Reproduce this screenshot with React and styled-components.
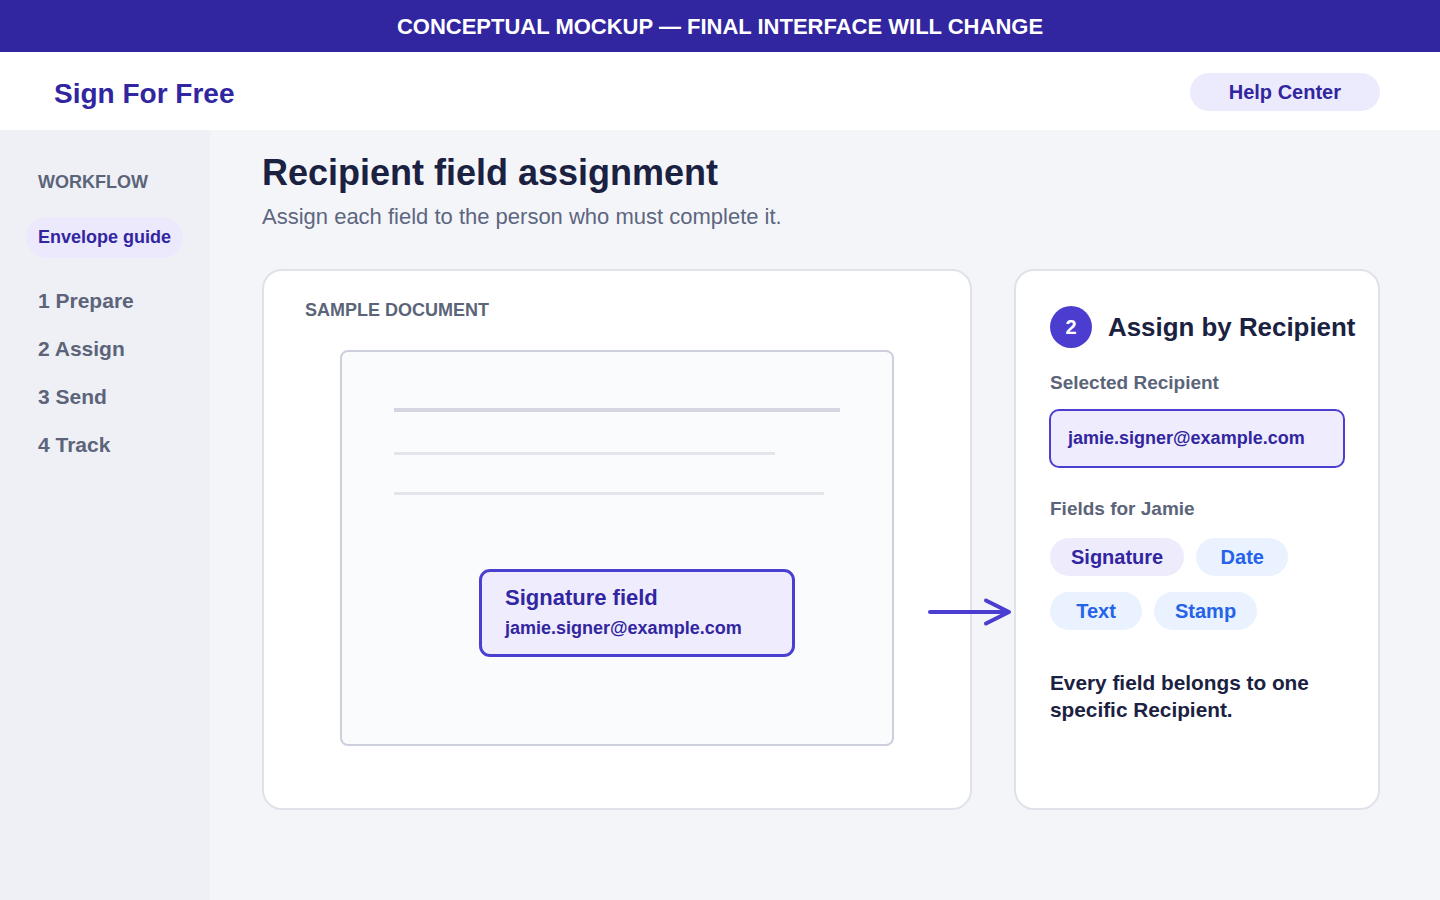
import React from "react";
import styled, { createGlobalStyle } from "styled-components";

const GlobalStyle = createGlobalStyle`
  * { box-sizing: border-box; }
  html, body { margin: 0; padding: 0; }
  body {
    font-family: "Liberation Sans", Arial, Helvetica, sans-serif;
    background: #f4f5f9;
    color: #1b2140;
  }
`;

const Banner = styled.div`
  height: 52px;
  padding-top: 2px;
  background: #3225a0;
  color: #ffffff;
  display: flex;
  align-items: center;
  justify-content: center;
  font-size: 22px;
  font-weight: 700;
  text-transform: uppercase;
`;

const Header = styled.header`
  height: 78px;
  background: #ffffff;
  display: flex;
  align-items: center;
  justify-content: space-between;
  padding: 2px 60px 0 54px;
`;

const Brand = styled.div`
  font-size: 28px;
  font-weight: 700;
  color: #3126a0;
  margin-top: 4px;
`;

const HelpButton = styled.button`
  height: 38px;
  padding: 0 39px;
  border: none;
  border-radius: 999px;
  background: #ecebfd;
  color: #3126a0;
  font-family: inherit;
  font-size: 20px;
  font-weight: 700;
  cursor: pointer;
`;

const Body = styled.div`
  display: grid;
  grid-template-columns: 210px 1fr;
  min-height: calc(100vh - 130px);
`;

const Sidebar = styled.aside`
  background: #eff0f6;
  padding: 42px 0 0 38px;
  display: flex;
  flex-direction: column;
  align-items: flex-start;
`;

const SideHeading = styled.div`
  font-size: 18px;
  line-height: 21px;
  font-weight: 700;
  color: #5b6479;
  text-transform: uppercase;
`;

const GuidePill = styled.div`
  margin: 24px 0 0 -12px;
  height: 41px;
  padding: 0 12px;
  display: flex;
  align-items: center;
  border-radius: 999px;
  background: #ece9fd;
  color: #3126a0;
  font-size: 18px;
  font-weight: 700;
`;

const NavList = styled.nav`
  margin-top: 31px;
  display: flex;
  flex-direction: column;
  gap: 24px;
`;

const NavItem = styled.div`
  font-size: 21px;
  line-height: 24px;
  font-weight: 700;
  color: #5b6479;
`;

const Main = styled.main`
  padding: 21px 60px 40px 52px;
`;

const Title = styled.h1`
  margin: 0;
  font-size: 36px;
  line-height: 43px;
  font-weight: 700;
  color: #1b2140;
`;

const Subtitle = styled.p`
  margin: 10px 0 0;
  font-size: 22px;
  line-height: 26px;
  color: #5d6680;
`;

const CardRow = styled.div`
  margin-top: 39px;
  display: flex;
  gap: 42px;
  position: relative;
`;

const Card = styled.section`
  height: 541px;
  background: #ffffff;
  border: 2px solid #dfe2ea;
  border-radius: 20px;
  width: ${(p) => p.$width}px;
  padding: ${(p) => p.$pad};
`;

const SectionLabel = styled.div`
  font-size: 18px;
  line-height: 21px;
  font-weight: 700;
  color: #5b6479;
  text-transform: uppercase;
`;

const Page = styled.div`
  position: relative;
  width: 554px;
  height: 396px;
  margin: 29px auto 0;
  background: #fafbfd;
  border: 2px solid #cdd0dc;
  border-radius: 8px;
  padding: 56px 52px 0;
`;

const TextLine = styled.div`
  height: ${(p) => p.$h}px;
  width: ${(p) => p.$w};
  margin-top: ${(p) => p.$mt}px;
  background: ${(p) => p.$color};
`;

const FieldBox = styled.div`
  position: absolute;
  left: 137px;
  top: 217px;
  width: 316px;
  height: 88px;
  border: 3px solid #4b3fd0;
  border-radius: 11px;
  background: #eeecfd;
  padding: 13px 23px 0;
  color: #3126a0;
`;

const FieldTitle = styled.div`
  font-size: 22px;
  line-height: 26px;
  font-weight: 700;
`;

const FieldEmail = styled.div`
  margin-top: 7px;
  font-size: 18px;
  line-height: 21px;
  font-weight: 700;
`;

const Arrow = styled.svg`
  position: absolute;
  left: 666px;
  top: 328px;
  overflow: visible;
`;

const PanelHead = styled.div`
  display: flex;
  align-items: center;
  gap: 16px;
`;

const StepBadge = styled.div`
  width: 42px;
  height: 42px;
  border-radius: 50%;
  background: #4b3dd0;
  color: #ffffff;
  display: flex;
  align-items: center;
  justify-content: center;
  font-size: 20px;
  font-weight: 700;
  flex-shrink: 0;
`;

const PanelTitle = styled.h2`
  margin: 0;
  font-size: 25.9px;
  font-weight: 700;
  color: #1b2140;
  white-space: nowrap;
`;

const FieldLabel = styled.div`
  margin-top: ${(p) => p.$mt}px;
  font-size: 19px;
  line-height: 22px;
  font-weight: 700;
  color: #5b6479;
`;

const RecipientInput = styled.div`
  margin: 15px 0 0 -1px;
  width: 296px;
  height: 59px;
  border: 2px solid #4b3fd0;
  border-radius: 10px;
  background: #eeecfd;
  padding-left: 17px;
  display: flex;
  align-items: center;
  color: #3126a0;
  font-size: 18px;
  font-weight: 700;
`;

const ChipGrid = styled.div`
  margin-top: 18px;
  display: flex;
  flex-wrap: wrap;
  column-gap: 12px;
  row-gap: 16px;
  width: 240px;
`;

const Chip = styled.span`
  height: 38px;
  min-width: 92px;
  padding: 0 21px;
  border-radius: 999px;
  display: inline-flex;
  align-items: center;
  justify-content: center;
  font-size: 20px;
  font-weight: 700;
  background: ${(p) => (p.$tone === "violet" ? "#eeebfd" : "#e9f2fe")};
  color: ${(p) => (p.$tone === "violet" ? "#3126a0" : "#2563eb")};
`;

const Note = styled.p`
  margin: 39px 0 0;
  font-size: 20.8px;
  line-height: 27px;
  font-weight: 700;
  color: #1b2140;
`;

const steps = ["1 Prepare", "2 Assign", "3 Send", "4 Track"];
const chips = [
  { label: "Signature", tone: "violet" },
  { label: "Date", tone: "blue" },
  { label: "Text", tone: "blue" },
  { label: "Stamp", tone: "blue" },
];

export default function App() {
  return (
    <>
      <GlobalStyle />
      <Banner>Conceptual mockup — final interface will change</Banner>
      <Header>
        <Brand>Sign For Free</Brand>
        <HelpButton>Help Center</HelpButton>
      </Header>
      <Body>
        <Sidebar>
          <SideHeading>Workflow</SideHeading>
          <GuidePill>Envelope guide</GuidePill>
          <NavList>
            {steps.map((s) => (
              <NavItem key={s}>{s}</NavItem>
            ))}
          </NavList>
        </Sidebar>
        <Main>
          <Title>Recipient field assignment</Title>
          <Subtitle>Assign each field to the person who must complete it.</Subtitle>
          <CardRow>
            <Card $width={710} $pad="29px 41px">
              <SectionLabel>Sample document</SectionLabel>
              <Page>
                <TextLine $h={4} $w="100%" $mt={0} $color="#d3d6e0" />
                <TextLine $h={3} $w="381px" $mt={40} $color="#e3e5ec" />
                <TextLine $h={3} $w="430px" $mt={37} $color="#e3e5ec" />
                <FieldBox>
                  <FieldTitle>Signature field</FieldTitle>
                  <FieldEmail>jamie.signer@example.com</FieldEmail>
                </FieldBox>
              </Page>
            </Card>
            <Arrow width="84" height="30" viewBox="0 0 84 30">
              <path
                d="M2 15 H80 M58 3.5 L81 15 L58 26.5"
                fill="none"
                stroke="#4b3dd0"
                strokeWidth="4"
                strokeLinecap="round"
                strokeLinejoin="round"
              />
            </Arrow>
            <Card $width={366} $pad="35px 34px">
              <PanelHead>
                <StepBadge>2</StepBadge>
                <PanelTitle>Assign by Recipient</PanelTitle>
              </PanelHead>
              <FieldLabel $mt={24}>Selected Recipient</FieldLabel>
              <RecipientInput>jamie.signer@example.com</RecipientInput>
              <FieldLabel $mt={30}>Fields for Jamie</FieldLabel>
              <ChipGrid>
                {chips.map((c) => (
                  <Chip key={c.label} $tone={c.tone}>
                    {c.label}
                  </Chip>
                ))}
              </ChipGrid>
              <Note>Every field belongs to one specific Recipient.</Note>
            </Card>
          </CardRow>
        </Main>
      </Body>
    </>
  );
}
